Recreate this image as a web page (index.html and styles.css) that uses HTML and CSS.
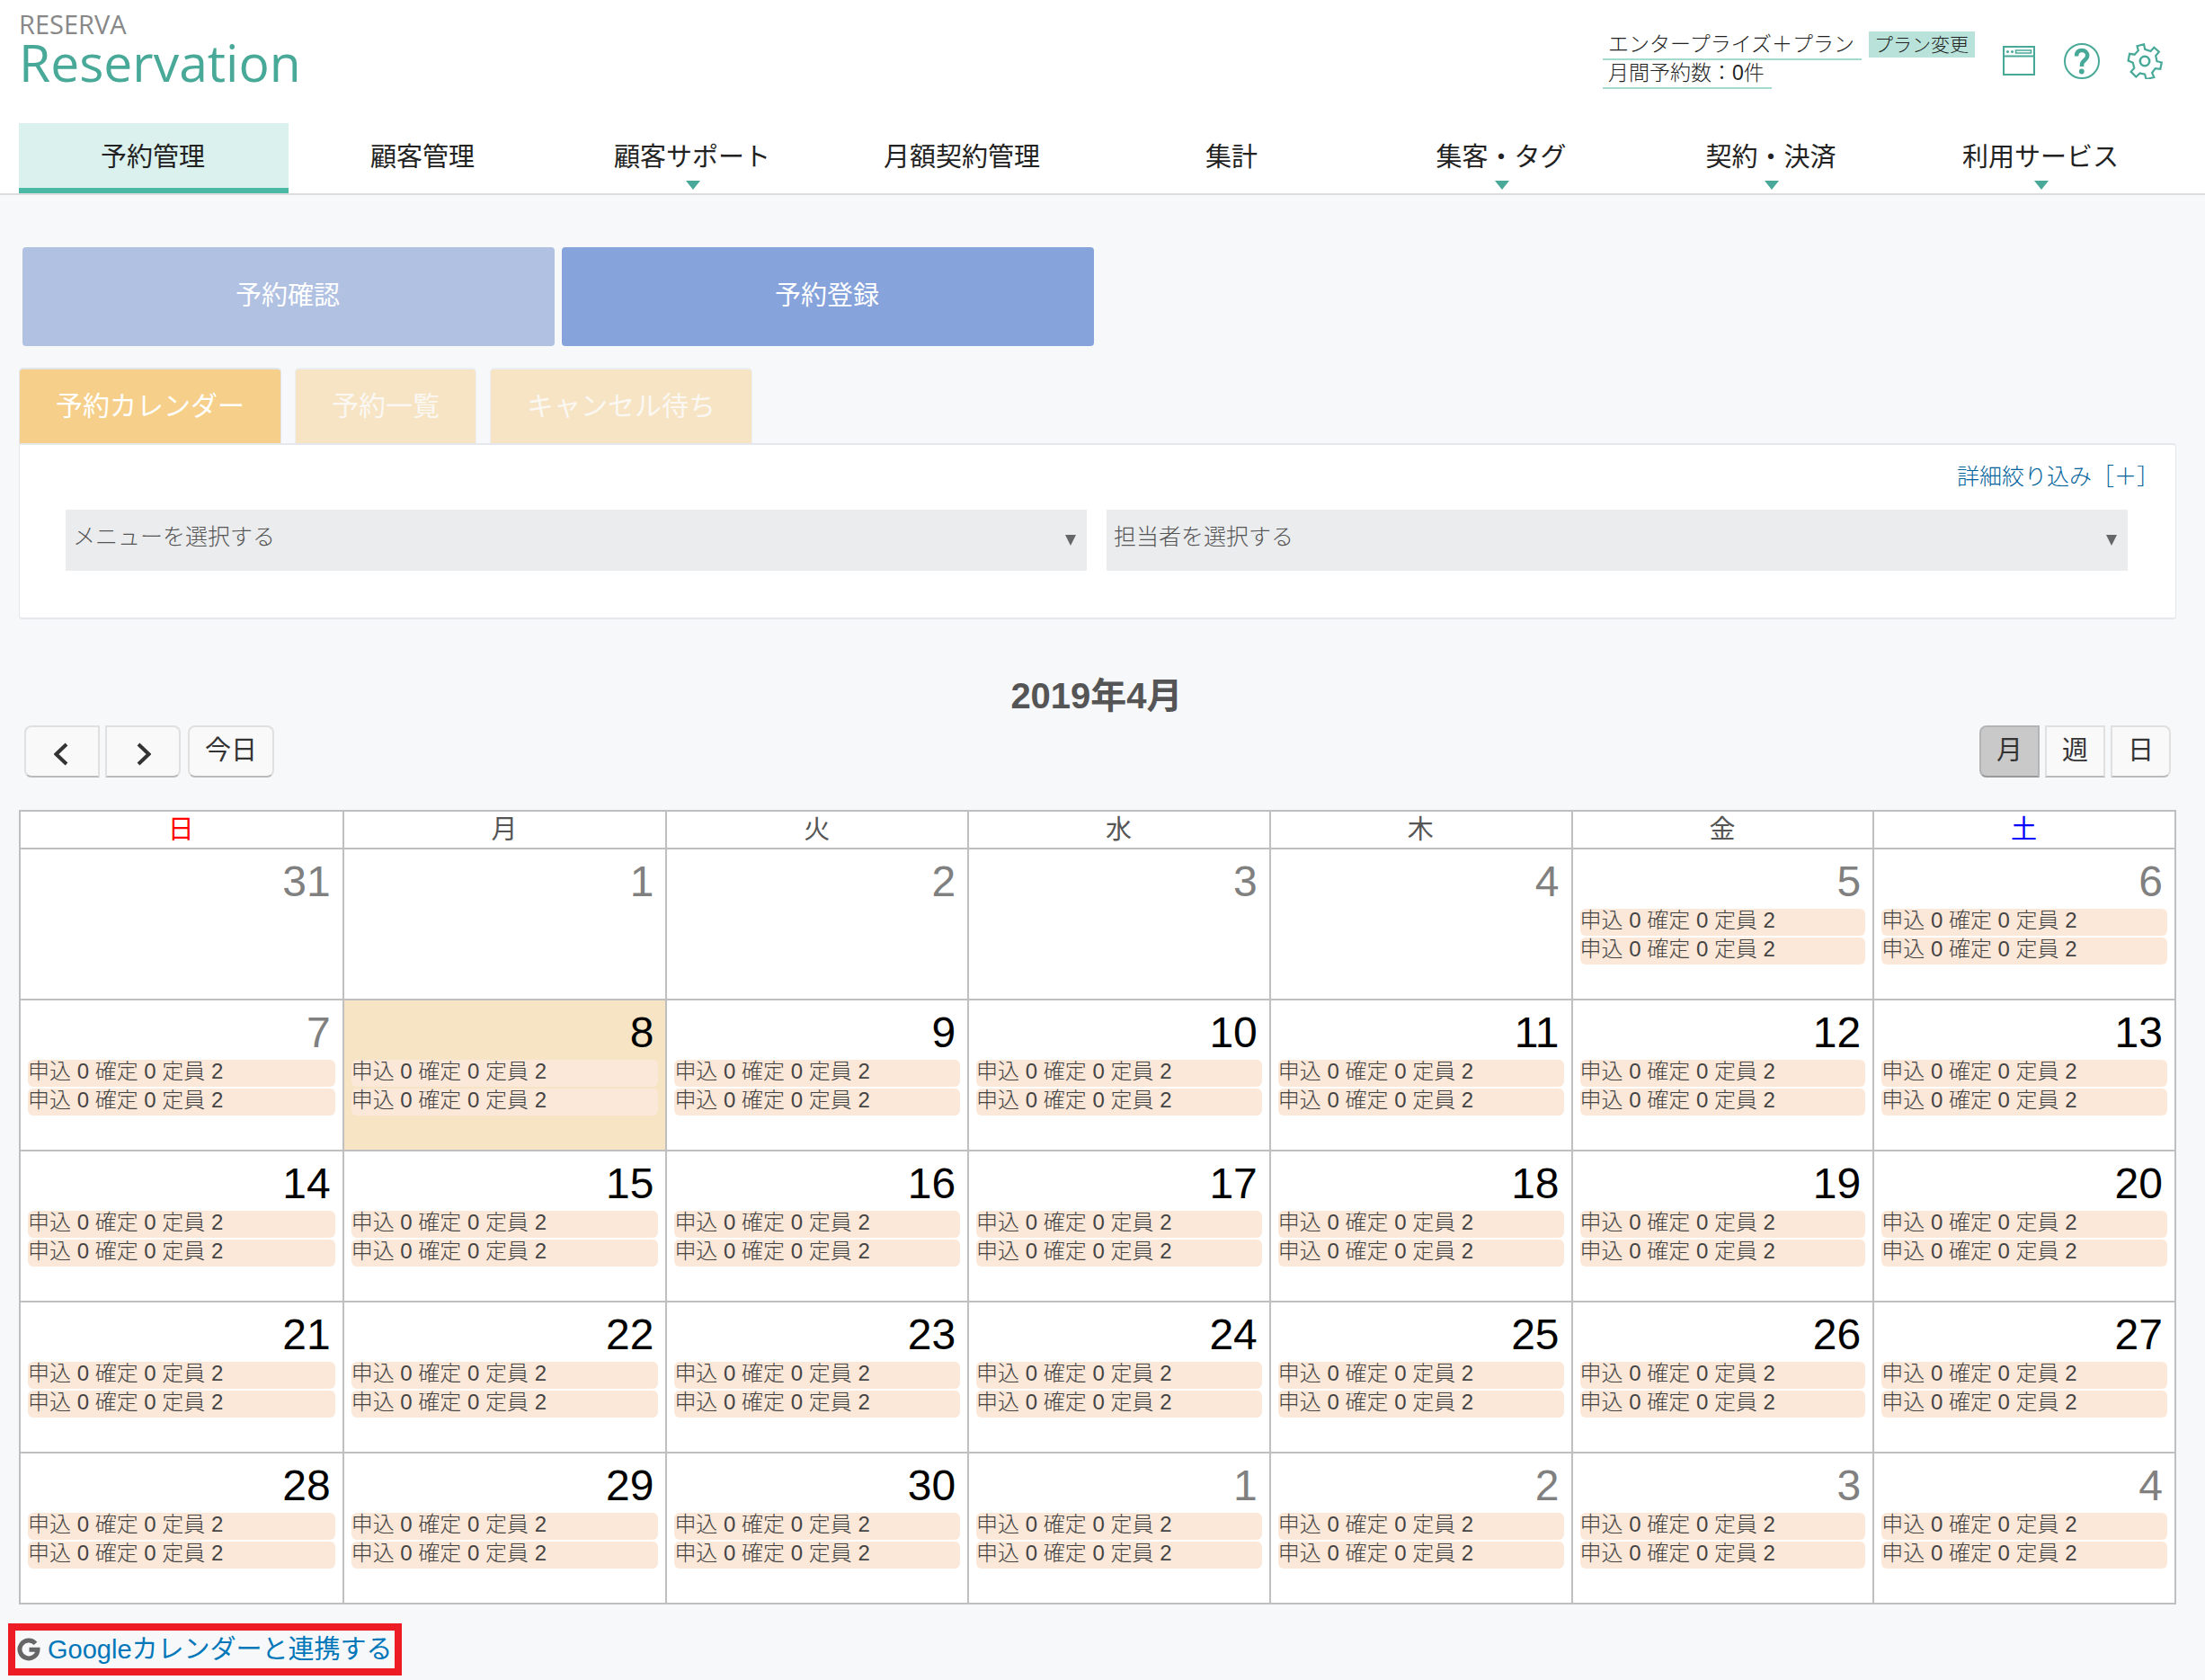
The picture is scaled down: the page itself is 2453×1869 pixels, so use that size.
FILE: index.html
```html
<!DOCTYPE html>
<html lang="ja">
<head>
<meta charset="utf-8">
<meta name="viewport" content="width=device-width, initial-scale=1">
<title>RESERVA Reservation</title>
<link rel="stylesheet" href="styles.css">
</head>
<body>
<header class="header">
  <div class="topbar">
    <a class="logo" href="#"><span class="logo-brand">RESERVA</span><span class="logo-product">Reservation</span></a>
    <div class="account">
      <div class="plan">
        <div class="plan-row"><span class="plan-text">エンタープライズ＋プラン</span><a class="plan-change" href="#">プラン変更</a></div>
        <div class="plan-row"><span class="plan-text">月間予約数：0件</span></div>
      </div>
      <div class="tools">
        <a class="tool" href="#" aria-label="サイト"><svg width="40" height="40" viewBox="0 0 40 40" fill="none" stroke="currentColor"><rect x="3" y="4" width="34" height="31" stroke-width="2"/><path d="M3 14.500h34" stroke-width="2"/><rect x="16.500" y="8" width="17" height="3" stroke-width="1.500"/><circle cx="7.500" cy="9.500" r="1.500" fill="currentColor" stroke="none"/><circle cx="12.500" cy="9.500" r="1.500" fill="currentColor" stroke="none"/></svg></a>
        <a class="tool" href="#" aria-label="ヘルプ"><svg width="40" height="40" viewBox="0 0 40 40" fill="none" stroke="currentColor"><circle cx="20" cy="20" r="19" stroke-width="2"/><path d="M14 14.500C14 10 16.500 8 20 8s6.200 2.200 6.200 5.800c0 5-6.200 5.500-6.200 10.200v2" stroke-width="4.500"/><circle cx="19.800" cy="31.500" r="2.900" fill="currentColor" stroke="none"/></svg></a>
        <a class="tool" href="#" aria-label="設定"><svg width="40" height="40" viewBox="0 0 40 40" fill="none" stroke="currentColor" stroke-width="2.200"><path d="M11.500 3.200L19 1.300l1.200 5.500 6.300 2.200 3.800-4.300 5.500 5-3.600 4.300 1.300 6.200 5.300 1.300-1.500 7.300-5.600-.6-3.600 4.800 2.200 5-8.800 2-1.400-5.300-5.500-1.200-4.300 4-5.600-5.600 3.600-4.200-1.500-6L1.600 19.500l1.500-7.700 5.500.9 4.200-4.400z"/><circle cx="20" cy="20" r="5.200" stroke-width="2.600"/></svg></a>
      </div>
    </div>
  </div>
  <nav class="nav">
    <a class="nav-item is-active" href="#">予約管理</a>
    <a class="nav-item" href="#">顧客管理</a>
    <a class="nav-item has-menu" href="#">顧客サポート</a>
    <a class="nav-item" href="#">月額契約管理</a>
    <a class="nav-item" href="#">集計</a>
    <a class="nav-item has-menu" href="#">集客・タグ</a>
    <a class="nav-item has-menu" href="#">契約・決済</a>
    <a class="nav-item has-menu" href="#">利用サービス</a>
  </nav>
</header>
<main class="main">
  <div class="modes">
    <a class="mode is-current" href="#">予約確認</a>
    <a class="mode" href="#">予約登録</a>
  </div>
  <div class="tabs">
    <a class="tab is-active" href="#">予約カレンダー</a>
    <a class="tab" href="#">予約一覧</a>
    <a class="tab" href="#">キャンセル待ち</a>
  </div>
  <section class="filter">
    <a class="filter-more" href="#">詳細絞り込み［＋］</a>
    <div class="filter-fields">
      <div class="field"><select class="field-select" aria-label="メニュー"><option>メニューを選択する</option></select></div>
      <div class="field"><select class="field-select" aria-label="担当者"><option>担当者を選択する</option></select></div>
    </div>
  </section>
  <h1 class="month">2019年4月</h1>
  <div class="toolbar">
    <div class="toolbar-left">
      <div class="pager">
        <button class="btn btn-first btn-arrow" type="button" aria-label="前の月"><svg width="18" height="26" viewBox="0 0 18 26" fill="none" stroke="currentColor" stroke-width="4"><path d="M14 2L2.500 13 14 24"/></svg></button>
        <button class="btn btn-last btn-arrow" type="button" aria-label="次の月"><svg width="18" height="26" viewBox="0 0 18 26" fill="none" stroke="currentColor" stroke-width="4"><path d="M4 2l11.500 11L4 24"/></svg></button>
      </div>
      <button class="btn btn-first btn-last" type="button">今日</button>
    </div>
    <div class="pager">
      <button class="btn btn-first btn-on" type="button">月</button>
      <button class="btn" type="button">週</button>
      <button class="btn btn-last" type="button">日</button>
    </div>
  </div>
  <table class="calendar">
    <colgroup><col class="col-wide"><col class="col-wide"><col><col><col><col><col></colgroup>
    <thead>
      <tr><th class="sun" scope="col">日</th><th scope="col">月</th><th scope="col">火</th><th scope="col">水</th><th scope="col">木</th><th scope="col">金</th><th class="sat" scope="col">土</th></tr>
    </thead>
    <tbody>
      <tr>
        <td class="muted"><div class="day">31</div></td>
        <td class="muted"><div class="day">1</div></td>
        <td class="muted"><div class="day">2</div></td>
        <td class="muted"><div class="day">3</div></td>
        <td class="muted"><div class="day">4</div></td>
        <td class="muted"><div class="day">5</div><a class="event" href="#">申込 0 確定 0 定員 2</a><a class="event" href="#">申込 0 確定 0 定員 2</a></td>
        <td class="muted"><div class="day">6</div><a class="event" href="#">申込 0 確定 0 定員 2</a><a class="event" href="#">申込 0 確定 0 定員 2</a></td>
      </tr>
      <tr>
        <td class="muted"><div class="day">7</div><a class="event" href="#">申込 0 確定 0 定員 2</a><a class="event" href="#">申込 0 確定 0 定員 2</a></td>
        <td class="today"><div class="day">8</div><a class="event" href="#">申込 0 確定 0 定員 2</a><a class="event" href="#">申込 0 確定 0 定員 2</a></td>
        <td><div class="day">9</div><a class="event" href="#">申込 0 確定 0 定員 2</a><a class="event" href="#">申込 0 確定 0 定員 2</a></td>
        <td><div class="day">10</div><a class="event" href="#">申込 0 確定 0 定員 2</a><a class="event" href="#">申込 0 確定 0 定員 2</a></td>
        <td><div class="day">11</div><a class="event" href="#">申込 0 確定 0 定員 2</a><a class="event" href="#">申込 0 確定 0 定員 2</a></td>
        <td><div class="day">12</div><a class="event" href="#">申込 0 確定 0 定員 2</a><a class="event" href="#">申込 0 確定 0 定員 2</a></td>
        <td><div class="day">13</div><a class="event" href="#">申込 0 確定 0 定員 2</a><a class="event" href="#">申込 0 確定 0 定員 2</a></td>
      </tr>
      <tr>
        <td><div class="day">14</div><a class="event" href="#">申込 0 確定 0 定員 2</a><a class="event" href="#">申込 0 確定 0 定員 2</a></td>
        <td><div class="day">15</div><a class="event" href="#">申込 0 確定 0 定員 2</a><a class="event" href="#">申込 0 確定 0 定員 2</a></td>
        <td><div class="day">16</div><a class="event" href="#">申込 0 確定 0 定員 2</a><a class="event" href="#">申込 0 確定 0 定員 2</a></td>
        <td><div class="day">17</div><a class="event" href="#">申込 0 確定 0 定員 2</a><a class="event" href="#">申込 0 確定 0 定員 2</a></td>
        <td><div class="day">18</div><a class="event" href="#">申込 0 確定 0 定員 2</a><a class="event" href="#">申込 0 確定 0 定員 2</a></td>
        <td><div class="day">19</div><a class="event" href="#">申込 0 確定 0 定員 2</a><a class="event" href="#">申込 0 確定 0 定員 2</a></td>
        <td><div class="day">20</div><a class="event" href="#">申込 0 確定 0 定員 2</a><a class="event" href="#">申込 0 確定 0 定員 2</a></td>
      </tr>
      <tr>
        <td><div class="day">21</div><a class="event" href="#">申込 0 確定 0 定員 2</a><a class="event" href="#">申込 0 確定 0 定員 2</a></td>
        <td><div class="day">22</div><a class="event" href="#">申込 0 確定 0 定員 2</a><a class="event" href="#">申込 0 確定 0 定員 2</a></td>
        <td><div class="day">23</div><a class="event" href="#">申込 0 確定 0 定員 2</a><a class="event" href="#">申込 0 確定 0 定員 2</a></td>
        <td><div class="day">24</div><a class="event" href="#">申込 0 確定 0 定員 2</a><a class="event" href="#">申込 0 確定 0 定員 2</a></td>
        <td><div class="day">25</div><a class="event" href="#">申込 0 確定 0 定員 2</a><a class="event" href="#">申込 0 確定 0 定員 2</a></td>
        <td><div class="day">26</div><a class="event" href="#">申込 0 確定 0 定員 2</a><a class="event" href="#">申込 0 確定 0 定員 2</a></td>
        <td><div class="day">27</div><a class="event" href="#">申込 0 確定 0 定員 2</a><a class="event" href="#">申込 0 確定 0 定員 2</a></td>
      </tr>
      <tr>
        <td><div class="day">28</div><a class="event" href="#">申込 0 確定 0 定員 2</a><a class="event" href="#">申込 0 確定 0 定員 2</a></td>
        <td><div class="day">29</div><a class="event" href="#">申込 0 確定 0 定員 2</a><a class="event" href="#">申込 0 確定 0 定員 2</a></td>
        <td><div class="day">30</div><a class="event" href="#">申込 0 確定 0 定員 2</a><a class="event" href="#">申込 0 確定 0 定員 2</a></td>
        <td class="muted"><div class="day">1</div><a class="event" href="#">申込 0 確定 0 定員 2</a><a class="event" href="#">申込 0 確定 0 定員 2</a></td>
        <td class="muted"><div class="day">2</div><a class="event" href="#">申込 0 確定 0 定員 2</a><a class="event" href="#">申込 0 確定 0 定員 2</a></td>
        <td class="muted"><div class="day">3</div><a class="event" href="#">申込 0 確定 0 定員 2</a><a class="event" href="#">申込 0 確定 0 定員 2</a></td>
        <td class="muted"><div class="day">4</div><a class="event" href="#">申込 0 確定 0 定員 2</a><a class="event" href="#">申込 0 確定 0 定員 2</a></td>
      </tr>
    </tbody>
  </table>
</main>
<footer class="footer">
  <div class="sync">
    <svg class="sync-icon" width="26" height="26" viewBox="0 0 26 26" fill="none" stroke="currentColor" stroke-width="5"><path d="M20.500 6.300A10 10 0 1 0 23 13.200H13.500"/></svg>
    <a class="sync-link" href="#">Googleカレンダーと連携する</a>
  </div>
</footer>
</body>
</html>
```
FILE: styles.css
```css
* {
  box-sizing: border-box;
}

body {
  margin: 0;
  background: #f7f8fa;
  color: #555;
  font-family: "Liberation Sans", "Noto Sans CJK JP", sans-serif;
  font-size: 24px;
  font-weight: 300;
}

a {
  color: inherit;
  text-decoration: none;
}

svg {
  display: block;
}

/* Header */
.header {
  background: #fff;
  border-bottom: 2px solid #ddd;
  color: #222;
}

.topbar {
  display: flex;
  justify-content: space-between;
  height: 137px;
  padding: 12px 47px 0 21px;
}

.logo {
  display: flex;
  flex-direction: column;
  font-family: "Open Sans", sans-serif;
  font-weight: 500;
}

.logo-brand {
  color: #888;
  font-size: 29px;
  line-height: 30px;
}

.logo-product {
  color: #48a999;
  font-size: 57px;
  line-height: 54px;
}

.account {
  display: flex;
  gap: 29px;
}

.plan {
  padding-top: 23px;
}

.plan-row {
  display: flex;
  align-items: flex-start;
  gap: 8px;
}

.plan-text {
  height: 32px;
  padding: 0 8px 0 6px;
  border-bottom: 2px solid #a3dbd0;
  font-size: 23px;
  line-height: 28px;
}

.plan-change {
  padding: 0 7px 0 6px;
  background: #b8e2da;
  font-size: 21px;
  line-height: 29px;
}

.tools {
  display: flex;
  gap: 30px;
  padding-top: 36px;
  color: #48a999;
}

.nav {
  display: grid;
  grid-template-columns: repeat(8, 1fr);
  padding: 0 32px 0 21px;
}

.nav-item {
  position: relative;
  height: 78px;
  padding-right: 2px;
  border-bottom: 6px solid transparent;
  font-size: 29px;
  font-weight: 400;
  line-height: 76px;
  text-align: center;
}

.nav-item.is-active {
  background: #dbf1ed;
  border-bottom-color: #4cb9a7;
}

.has-menu::after {
  content: "";
  position: absolute;
  top: 64px;
  left: 50%;
  margin-left: -8px;
  border: 8px solid transparent;
  border-top: 10px solid #48a999;
  border-bottom: 0;
}

/* Main */
.main {
  padding: 58px 32px 0 21px;
}

.modes {
  display: grid;
  grid-template-columns: 1fr 1fr;
  gap: 8px;
  width: 50%;
  padding: 0 4px;
}

.mode {
  height: 110px;
  padding-right: 2px;
  border-radius: 4px;
  background: #86a3db;
  color: #fff;
  font-size: 29px;
  font-weight: 400;
  line-height: 108px;
  text-align: center;
}

.mode.is-current {
  background: #b0c1e2;
}

.tabs {
  display: flex;
  gap: 15px;
  margin-top: 24px;
}

.tab {
  height: 84px;
  padding: 0 40px;
  border: 1px solid #ebeff3;
  border-top-width: 2px;
  border-bottom: 0;
  border-radius: 5px 5px 0 0;
  background: #f6e4c4;
  color: #fbf8f4;
  font-size: 30px;
  font-weight: 400;
  line-height: 82px;
}

.tab.is-active {
  border-color: #e1e6ea;
  background: #f6cf8a;
  color: #fff;
}

.filter {
  display: flex;
  flex-direction: column;
  height: 196px;
  padding: 17px 18px 0 51px;
  border: 2px solid #e4e8ec;
  border-width: 2px 1px;
  border-radius: 0 4px 4px 4px;
  background: #fff;
}

.filter-more {
  align-self: flex-end;
  color: #00629a;
  font-size: 25px;
  line-height: 36px;
}

.filter-fields {
  display: grid;
  grid-template-columns: 1fr 1fr;
  gap: 22px;
  margin-top: 19px;
  padding-right: 35px;
}

.field {
  position: relative;
}

.field::after {
  content: "";
  position: absolute;
  top: 28px;
  right: 12px;
  border: 6px solid transparent;
  border-top: 12px solid #666;
  border-bottom: 0;
  pointer-events: none;
}

.field-select {
  display: block;
  width: 100%;
  height: 68px;
  padding: 0 30px 8px 8px;
  border: 0;
  border-radius: 0;
  background: #ebecee;
  color: #555;
  font: inherit;
  font-size: 25px;
  appearance: none;
}

.month {
  margin: 60px 0 0;
  padding-right: 2px;
  font-size: 40px;
  font-weight: 700;
  line-height: 50px;
  text-align: center;
}

.toolbar {
  display: flex;
  justify-content: space-between;
  margin-top: 8px;
  padding: 0 6px;
}

.toolbar-left {
  display: flex;
  gap: 8px;
}

.pager {
  display: flex;
  gap: 6px;
}

.btn {
  height: 58px;
  padding: 0 17px 8px;
  border: 2px solid #e0e0e0;
  border-bottom-color: #bababa;
  background: #f9f9f9;
  color: #333;
  font: inherit;
  font-size: 29px;
  font-weight: 400;
}

.btn-first {
  border-top-left-radius: 8px;
  border-bottom-left-radius: 8px;
}

.btn-last {
  border-top-right-radius: 8px;
  border-bottom-right-radius: 8px;
}

.btn-arrow {
  padding: 6px 31px 0;
}

.btn-on {
  border-color: #b4b4b4;
  border-bottom-color: #999;
  background: #c9c9c9;
}

/* Calendar */
.calendar {
  width: 100%;
  margin-top: 36px;
  border-collapse: collapse;
  table-layout: fixed;
  background: #fff;
}

.col-wide {
  width: 15%;
}

.calendar th,
.calendar td {
  border: 2px solid #bfbfbf;
}

.calendar th {
  height: 42px;
  padding: 0 1px 0 0;
  font-size: 29px;
  font-weight: 400;
  line-height: 38px;
}

.calendar .sun {
  color: #f00;
}

.calendar .sat {
  color: #00f;
}

.calendar td {
  height: 168px;
  padding: 8px 8px 0;
  vertical-align: top;
}

.calendar .today {
  background: #f6e4c4;
}

.day {
  margin-bottom: 2px;
  padding-right: 5px;
  color: #000;
  font-size: 48px;
  line-height: 56px;
  text-align: right;
}

.muted .day {
  color: #808080;
}

.event {
  display: block;
  height: 30px;
  margin-bottom: 2px;
  border-radius: 6px;
  background: #fce8d9;
  color: #444;
  font-size: 24px;
  line-height: 26px;
}

/* Footer */
.footer {
  padding: 21px 9px 5px;
}

.sync {
  display: inline-flex;
  align-items: center;
  gap: 8px;
  height: 58px;
  padding: 0 2px;
  border: 8px solid #ed1c24;
  color: #666;
  vertical-align: top;
}

.sync-link {
  color: #0077b8;
  font-size: 29px;
  font-weight: 400;
  line-height: 40px;
}
```
